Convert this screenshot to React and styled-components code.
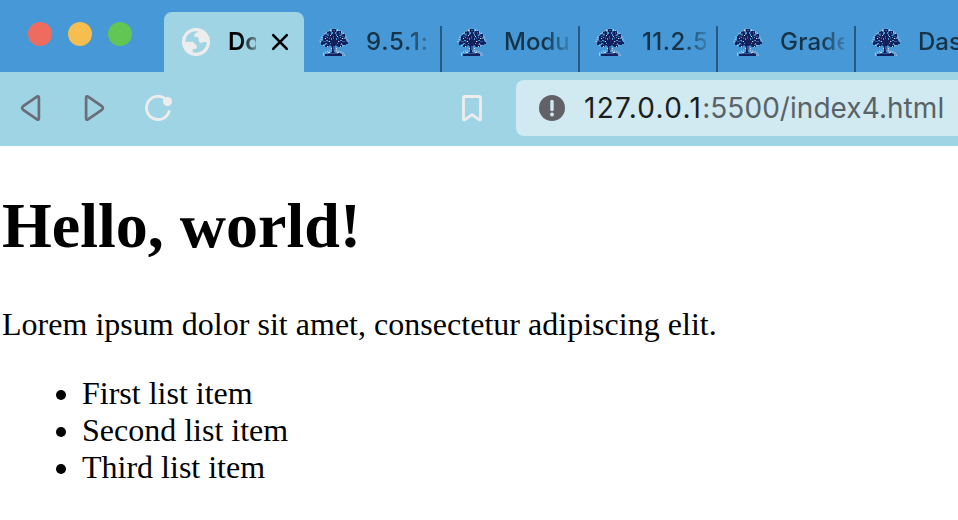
import React from "react";
import styled, { createGlobalStyle, css } from "styled-components";

const Global = createGlobalStyle`
  * { box-sizing: border-box; }
  body { margin: 0; background: #fff; overflow: hidden; }
`;
const Window = styled.div`
  display: flex;
  flex-direction: column;
  width: 958px;
  height: 520px;
  overflow: hidden;
  background: #fff;
  font-family: Inter, "Liberation Sans", sans-serif;
`;
const TabStrip = styled.header`
  display: flex;
  align-items: flex-end;
  height: 72px;
  flex: none;
  background: #4699d6;
`;
const WindowControls = styled.div`
  display: flex;
  gap: 16px;
  width: 164px;
  height: 72px;
  flex: none;
  padding: 22px 0 0 28px;
`;
const Control = styled.span`
  width: 24px;
  height: 24px;
  border-radius: 50%;
  background: ${(p) => p.$color};
`;
const Tab = styled.div`
  display: flex;
  align-items: center;
  flex: none;
  height: 60px;
  width: 138px;
  padding-left: 15px;
  background: linear-gradient(#25597f, #25597f) right bottom / 2px 46px no-repeat;
  ${(p) =>
    p.$active &&
    css`
      width: 140px;
      padding-left: 18px;
      background: #9fd4e4;
      border-radius: 8px 8px 0 0;
    `}
`;
const TabTitle = styled.span`
  width: ${(p) => (p.$active ? 28 : 64)}px;
  margin-left: ${(p) => (p.$active ? 18 : 17)}px;
  overflow: hidden;
  white-space: nowrap;
  font-size: 24px;
  line-height: 30px;
  font-weight: ${(p) => (p.$active ? 600 : 450)};
  color: ${(p) => (p.$active ? "#000" : "#173347")};
  letter-spacing: ${(p) => p.$spacing || 0}px;
  mask-image: linear-gradient(to right, #000 ${(p) => (p.$active ? 12 : 40)}px, transparent ${(p) => (p.$active ? 36 : 72)}px);
`;
const Icon = styled.svg`
  display: block;
  flex: none;
`;
const CloseIcon = styled(Icon)`
  margin-left: 15px;
`;
const Toolbar = styled.nav`
  display: flex;
  align-items: center;
  height: 74px;
  flex: none;
  padding: 0 0 2px 20px;
  background: #9fd4e4;
`;
const NavGroup = styled.div`
  display: flex;
  align-items: center;
  gap: 36px;
  width: 440px;
`;
const Address = styled.div`
  display: flex;
  align-items: center;
  flex: 1;
  height: 56px;
  margin-left: 32px;
  padding-left: 22px;
  border-radius: 8px 0 0 8px;
  background: #d1eaf1;
`;
const Url = styled.span`
  margin-left: 18px;
  font-size: 28px;
  line-height: 36px;
  white-space: nowrap;
  color: #596367;
  letter-spacing: 0.05px;
`;
const Host = styled.span`
  color: #1b1e20;
  letter-spacing: 1.3px;
`;
const Page = styled.main`
  padding: 43px 2px 0;
  font-family: "Liberation Serif", serif;
  font-size: 32px;
  line-height: 37px;
  color: #000;
`;
const Heading = styled.h1`
  margin: 0;
  font-size: 64px;
  line-height: 74px;
`;
const Paragraph = styled.p`
  margin: 43px 0 32px;
  letter-spacing: 0.02px;
`;
const List = styled.ul`
  margin: 0;
  padding-left: 80px;
`;

const GlobeIcon = () => (
  <Icon width="28" height="28" viewBox="0 0 28 28">
    <circle cx="14" cy="14" r="14" fill="#ededed" />
    <path
      d="M3.300 13.800C3.300 8 8 3.300 14 3.300h2.200c-.3 1.500-3.800 1.400-3.800 3.700 0 1.100.2 2.100 1.200 2.100h1.800c.8 0 1.200.8 1.200 2.200 0 2 .7 3.600 2.400 3.600 1.300 0 1.900-.9 3-.9h2.700c0 6-4.700 10.700-10.700 10.700-1.200 0-2.300-.2-3.300-.5V21h2.400c1 0 1.600-.7 1.600-2.200 0-1.400.2-2-1.300-2.200-1.200-.2-.9-2.800-3.500-2.800z"
      fill="#9fd4e4"
    />
  </Icon>
);

const TreeIcon = () => (
  <Icon width="30" height="28" viewBox="0 0 30 28">
    <path
      d="M1 14l2-5 4-4 5-3 3-1 4 1 5 3 3 4 2 5-2 2M4 17l4 1 3-1M19 17l3 1 4-1M4 25.500l4-2 4-1M17 22.500l4 1 4 2M4 27h22"
      fill="none"
      stroke="#c3cce5"
      strokeWidth="1.400"
      strokeDasharray="1 1.300"
    />
    <path
      fill="#13205c"
      d="M13 1h4v3h-1v2h1l1-3h4v3l-2 2h2l2-2h2v3l-2 2h3v2l2 1v2h-2v1h-3l-1-1h-2v1h2v2h-4l-2-2-2 2v5l2 1h3l3 1v2H6v-2h3l2-1 2-1v-5l-2-2-2 2H6v-2h1v-1H5l-1 1H2v-2l1-2 2-1H4V8l3-2 2 2h1L8 5V4l3-1 2 3h1V4h-1z"
    />
    <path
      fill="#31599b"
      d="M9 5h1v2H9zM14 2h2v1h-2zM20 4h1v2h-1zM6 8h2v1H6zM23 8h2v1h-2zM10 9h1v2h-1zM19 9h1v2h-1zM4 13h3v1H4zM23 13h3v1h-3zM14 8h1v3h-1zM8 13h2v1H8zM20 13h1v1h-1zM8 16h1v1H8zM21 16h1v1h-1zM14 18h2v4h-2zM10 25h9v1h-9z"
    />
    <path
      fill="#4699d6"
      d="M12 5h1v2h-1zM17 6h1v2h-1zM8 9h1v1H8zM21 9h1v1h-1zM12 10h1v2h-1zM17 10h1v2h-1zM7 12h2v1H7zM21 12h2v1h-2zM11 15h1v1h-1zM18 15h1v1h-1zM6 15h2v1H6zM22 15h1v1h-1z"
    />
    <path
      fill="#d5dbea"
      d="M11 2h1v1h-1zM18 2h1v1h-1zM11 7h1v1h-1zM18 8h1v1h-1zM6 10h1v1H6zM23 10h1v1h-1zM10 13h1v1h-1zM19 13h1v1h-1zM8 18h1v1H8zM21 18h1v1h-1zM12 20h1v1h-1zM17 20h1v1h-1zM9 24h2v1H9zM18 24h2v1h-2z"
    />
  </Icon>
);

const TABS = [
  { title: "9.5.1:", spacing: 0.8 },
  { title: "Modul", spacing: 0 },
  { title: "11.2.5", spacing: 0.4 },
  { title: "Grades", spacing: 0.2 },
  { title: "Dash", spacing: 0 },
];

export default function App() {
  return (
    <Window>
      <Global />
      <TabStrip>
        <WindowControls>
          <Control $color="#ed6b5f" />
          <Control $color="#f5be4f" />
          <Control $color="#62c655" />
        </WindowControls>
        <Tab $active>
          <GlobeIcon />
          <TabTitle $active>Do</TabTitle>
          <CloseIcon width="18" height="18" viewBox="0 0 18 18">
            <path d="M2.200 2.200 15.800 15.800M15.800 2.200 2.200 15.800" stroke="#000" strokeWidth="2.600" strokeLinecap="round" />
          </CloseIcon>
        </Tab>
        {TABS.map((t) => (
          <Tab key={t.title}>
            <TreeIcon />
            <TabTitle $spacing={t.spacing}>{t.title}</TabTitle>
          </Tab>
        ))}
      </TabStrip>
      <Toolbar>
        <NavGroup>
          <Icon width="28" height="28" viewBox="0 0 28 28">
            <path d="M17 2.600 3.200 12.200q-2.200 1.800 0 3.600L17 25.400q1.900.8 1.900-1.200V3.800q0-2-1.900-1.200z" fill="none" stroke="#6b6d78" strokeWidth="2.700" />
          </Icon>
          <Icon width="24" height="28" viewBox="0 0 24 28">
            <path d="M4 2.600 17.800 12.200q2.200 1.800 0 3.600L4 25.400q-1.900.8-1.900-1.200V3.800q0-2 1.900-1.200z" fill="none" stroke="#6b6d78" strokeWidth="2.700" />
          </Icon>
          <Icon width="30" height="28" viewBox="0 0 30 28">
            <path d="M20 3.900A11.600 11.600 0 1 0 25.100 17.500" fill="none" stroke="#ededed" strokeWidth="2.800" strokeLinecap="round" />
            <circle cx="23.500" cy="7.500" r="4.600" fill="#ededed" />
          </Icon>
        </NavGroup>
        <Icon width="24" height="28" viewBox="0 0 24 28">
          <path d="M4 2.500h15q1.500 0 1.500 1.500v21q0 1.500-1.500.6L12 20.700l-7 4.900q-1.500.9-1.500-.6V4q0-1.500 1.500-1.500z" fill="none" stroke="#ededed" strokeWidth="2.800" />
        </Icon>
        <Address>
          <Icon width="28" height="28" viewBox="0 0 28 28">
            <circle cx="14" cy="14" r="13" fill="#626168" />
            <path d="M14 7.500v8" stroke="#d1eaf1" strokeWidth="3.400" strokeLinecap="round" />
            <circle cx="14" cy="20.500" r="1.900" fill="#d1eaf1" />
          </Icon>
          <Url><Host>127.0.0.1</Host>:5500/index4.html</Url>
        </Address>
      </Toolbar>
      <Page>
        <Heading>Hello, world!</Heading>
        <Paragraph>Lorem ipsum dolor sit amet, consectetur adipiscing elit.</Paragraph>
        <List>
          <li>First list item</li>
          <li>Second list item</li>
          <li>Third list item</li>
        </List>
      </Page>
    </Window>
  );
}
